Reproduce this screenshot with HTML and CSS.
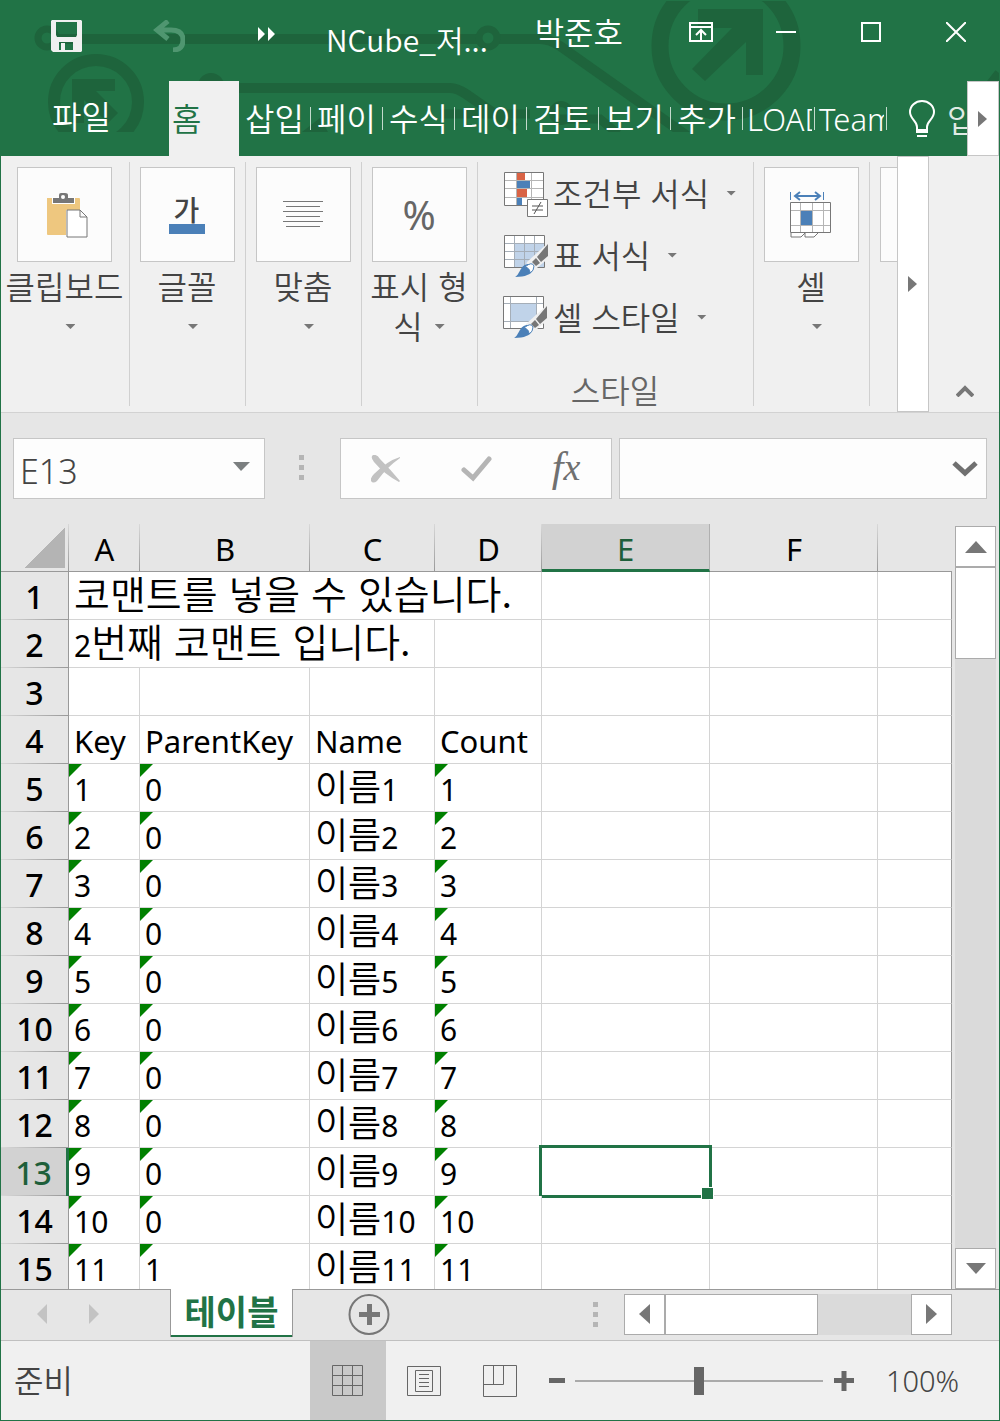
FILE: index.html
```html
<!DOCTYPE html>
<html lang="ko">
<head>
<meta charset="utf-8">
<meta name="viewport" content="width=device-width, initial-scale=1">
<title>NCube_저... - Excel</title>
<link rel="stylesheet" href="styles.css">
</head>
<body>
<div class="app">
  <header class="top">
    <svg class="circuit" width="998" height="131" viewBox="1 0 998 131" aria-hidden="true">
      <g fill="none" stroke="#1e643c">
        <circle cx="47" cy="37" r="9" stroke-width="7"/>
        <path d="M56 38H478M498 38H540Q550 38 560 45L690 137" stroke-width="10"/>
        <circle cx="488" cy="37" r="9" stroke-width="7"/>
        <circle cx="96" cy="101" r="42" stroke-width="12"/>
        <path d="M222 87H450Q457 87 466 93L515 127" stroke-width="10"/>
        <path d="M440 113H530" stroke-width="9"/>
        <circle cx="561" cy="112" r="9" stroke-width="6"/>
        <circle cx="726" cy="45" r="66" stroke-width="17"/>
        <path d="M560 118H600L618 133M985 90L999 72" stroke-width="9"/>
      </g>
      <g fill="#1e643c">
        <circle cx="211" cy="85" r="13"/>
        <path d="M72 78H115V90H96L118 112L108 122L84 99V122H72Z"/>
        <path d="M698 8H763V74H746V41L705 80L692 68L732 27H698Z"/>
        <path d="M302 131L320 117L328 131Z"/>
      </g>
    </svg>
    <div class="titlebar">
      <button class="quick" aria-label="저장">
        <svg width="32" height="32" viewBox="0 0 32 32"><path fill="#f0f0f0" fill-rule="evenodd" d="M1 0H30L31 1V31L30 32H2L0 30V1ZM5 2V15L6 17H25L26 15V2ZM8 22V30H10V23H14V30H22V22Z"/></svg>
      </button>
      <button class="quick" aria-label="실행 취소">
        <svg width="32" height="32" viewBox="0 0 32 32"><path fill="none" stroke="#4f9670" stroke-width="5" d="M15 1L4 10L15 19M4 10H18Q30 10 30 20T20 30"/></svg>
      </button>
      <button class="quick more" aria-label="더 보기">
        <svg width="18" height="14" viewBox="0 0 18 14"><path fill="#fff" d="M0 0L7 7L0 14ZM10 0L17 7L10 14Z"/></svg>
      </button>
      <h1 class="doc">NCube_저...</h1>
      <span class="user">박준호</span>
      <button class="win" aria-label="리본 표시 옵션">
        <svg width="24" height="20" viewBox="0 0 24 20" fill="none" stroke="#fff" stroke-width="2"><path d="M1 1H23V19H1ZM1 5H23M12 18V8M7 13L12 8L17 13"/></svg>
      </button>
      <button class="win" aria-label="최소화">
        <svg width="20" height="20" viewBox="0 0 20 20"><path d="M0 10H20" stroke="#fff" stroke-width="2"/></svg>
      </button>
      <button class="win" aria-label="최대화">
        <svg width="20" height="20" viewBox="0 0 20 20"><path d="M1 1H19V19H1Z" fill="none" stroke="#fff" stroke-width="2"/></svg>
      </button>
      <button class="win" aria-label="닫기">
        <svg width="20" height="20" viewBox="0 0 20 20"><path d="M0 0L20 20M20 0L0 20" stroke="#fff" stroke-width="2"/></svg>
      </button>
    </div>
    <nav class="tabs">
      <button class="file">파일</button>
      <button class="home">홈</button>
      <button class="tab">삽입</button>
      <button class="tab">페이</button>
      <button class="tab">수식</button>
      <button class="tab">데이</button>
      <button class="tab">검토</button>
      <button class="tab">보기</button>
      <button class="tab">추가</button>
      <button class="tab latin">LOAD</button>
      <button class="tab latin">Team</button>
      <button class="tell">
        <svg width="26" height="38" viewBox="0 0 26 38"><path d="M8 29V27C8 21 1 19 1 12A12 11 0 0 1 25 12C25 19 18 21 18 27V29" fill="none" stroke="#fff" stroke-width="2"/><path d="M7 29H19V33H7ZM8 35H18V37H8Z" fill="#fff"/></svg>
        <span>입</span>
      </button>
      <button class="tabscroll" aria-label="다음 탭">
        <svg width="10" height="16" viewBox="0 0 10 16"><path d="M0 0L9 8L0 16Z" fill="#777"/></svg>
      </button>
    </nav>
  </header>

  <section class="ribbon" aria-label="리본">
    <div class="group clip">
      <button class="big">
        <span class="tile"><svg width="46" height="46" viewBox="-4 0 46 46"><path d="M1 6H33Q34 6 34 7V18H20V43H2Q1 43 1 42Z" fill="#eec77f"/><path d="M6 5H29V12H6Z" fill="#fff"/><path d="M7 6H13V3Q13 1 15 1H19Q22 1 22 3V6H28V11H7Z" fill="#777"/><circle cx="17" cy="5" r="2" fill="#fff"/><path d="M21 18H34L41 25V45H21ZM34 18V25H41" fill="#fff" stroke="#777"/></svg></span>
        <span>클립보드<br>&nbsp;<i class="caret"></i></span>
      </button>
    </div>
    <div class="group">
      <button class="big">
        <span class="tile font"><b>가</b></span>
        <span>글꼴<br>&nbsp;<i class="caret"></i></span>
      </button>
    </div>
    <div class="group">
      <button class="big">
        <span class="tile"><svg width="40" height="27" viewBox="0 0 40 27"><path d="M0 .5H40M3 5.500H37M0 10.500H40M3 15.500H37M0 20.500H40M3 25.500H37" stroke="#777"/></svg></span>
        <span>맞춤<br>&nbsp;<i class="caret"></i></span>
      </button>
    </div>
    <div class="group">
      <button class="big">
        <span class="tile percent">%</span>
        <span>표시 형<br>식 <i class="caret"></i></span>
      </button>
    </div>
    <div class="group styles">
      <button class="line">
        <svg width="46" height="46" viewBox="0 0 46 46"><path d="M1 1H41V35H1Z" fill="#fff"/><path d="M1 9.500H41M1 17.500H41M1 26.500H41M13.500 1V35M28.500 1V35" stroke="#b5b5b5"/><path d="M14 2H22V9H14ZM14 18H24V26H14Z" fill="#d96345"/><path d="M14 10H27V17H14ZM14 27H19V34H14Z" fill="#4b80b8"/><path d="M1.500 1.500H40.500V34.500H1.500Z" fill="none" stroke="#777"/><path d="M24.500 28.500H44.500V45.500H24.500Z" fill="#fff" stroke="#777"/><path d="M29 35H40M29 39H40M31 43L38 31" stroke="#555" fill="none"/></svg>
        <span>조건부 서식</span><i class="caret"></i>
      </button>
      <button class="line">
        <svg width="46" height="46" viewBox="0 0 46 46"><path d="M1 2H42V34H1Z" fill="#fff"/><path d="M12 10H42V34H12Z" fill="#c0d3e9"/><path d="M1 10.500H42M1 18.500H42M1 26.500H42M11.500 2V34M21.500 2V34M31.500 2V34" stroke="#a5aeb8"/><path d="M1.500 2.500H41.500V34.500H1.500Z" fill="none" stroke="#777"/><path d="M46 9V25L29 39L22 36L24 29Z" fill="#f0f0f0"/><path d="M45 11V23L38 29L34 24ZM33 25L37 30L33 33L29 29Z" fill="#777"/><path d="M12 44C17 42 17 31 26 31C32 32 34 44 12 44Z" fill="#4b80b8"/><path d="M22 34Q29 28 31 33Q31 38 27 40Q27 35 22 34Z" fill="#fff" stroke="#4b80b8"/></svg>
        <span>표 서식</span><i class="caret"></i>
      </button>
      <button class="line">
        <svg width="46" height="46" viewBox="0 0 46 46"><path d="M0 1H41V34H0Z" fill="#fff"/><path d="M7 8H34V26H7Z" fill="#c0d3e9"/><path d="M0 8.500H41M0 26.500H41M7.500 1V34M33.500 1V34" stroke="#a5aeb8"/><path d="M.5 1.500H40.500V33.500H.5Z" fill="none" stroke="#777"/><path d="M45 9V25L28 39L21 36L23 29Z" fill="#f0f0f0"/><path d="M44 11V23L37 29L33 24ZM32 25L36 30L32 33L28 29Z" fill="#777"/><path d="M11 43C16 41 16 30 25 30C31 31 33 43 11 43Z" fill="#4b80b8"/><path d="M21 33Q28 27 30 32Q30 37 26 39Q26 34 21 33Z" fill="#fff" stroke="#4b80b8"/></svg>
        <span>셀 스타일</span><i class="caret"></i>
      </button>
      <p class="caption">스타일</p>
    </div>
    <div class="group">
      <button class="big">
        <span class="tile"><svg width="42" height="48" viewBox="0 0 42 48"><path d="M.5 1V9M33.500 1V9" stroke="#4b80b8"/><path d="M5 5H30M10 1L5 5L10 9M25 1L30 5L25 9" fill="none" stroke="#4b80b8" stroke-width="2"/><path d="M1 12H41V41H1Z" fill="#fff"/><path d="M1 19.500H41M1 34.500H41M10.500 12V41M22.500 12V41M33.500 12V41" stroke="#b5b5b5"/><path d="M11 20H22V34H11Z" fill="#4b80b8"/><path d="M.5 11.500H40.500V41.500H.5Z" fill="none" stroke="#777"/><path d="M1 42V46H11L15 42V46H24L28 42" fill="#fff" stroke="#777"/></svg></span>
        <span>셀<br>&nbsp;<i class="caret"></i></span>
      </button>
    </div>
    <div class="group cut"><span class="tile"></span></div>
    <button class="ribbonscroll" aria-label="리본 스크롤">
      <svg width="10" height="16" viewBox="0 0 10 16"><path d="M0 0L9 8L0 16Z" fill="#777"/></svg>
    </button>
    <button class="collapse" aria-label="리본 축소">
      <svg width="18" height="12" viewBox="0 0 18 12"><path d="M1 11L9 3L17 11" fill="none" stroke="#777" stroke-width="4"/></svg>
    </button>
  </section>

  <section class="formula">
    <div class="namebox">
      <input type="text" value="E13" aria-label="이름 상자">
      <svg width="17" height="9" viewBox="0 0 17 9"><path d="M0 0H17L8 9Z" fill="#7b7f80"/></svg>
    </div>
    <i class="dots"></i>
    <div class="fxbox">
      <button aria-label="취소"><svg width="30" height="28" viewBox="0 0 30 28"><path d="M2 0Q6 -1 9 4Q19 14 29 26L28 27Q13 19 3 7Q-1 2 2 0Z" fill="#c2c2c2"/><path d="M29 2L29 3Q16 12 6 26Q2 29 0 26Q-1 23 3 19Q16 6 29 2Z" fill="#c2c2c2"/></svg></button>
      <button aria-label="입력"><svg width="31" height="26" viewBox="0 0 31 26"><path d="M3 14L12 22L28 3" fill="none" stroke="#b5b5b5" stroke-width="5" stroke-linecap="round"/></svg></button>
      <button class="fx" aria-label="함수 삽입"><span>f</span>x</button>
    </div>
    <div class="fbar">
      <input type="text" aria-label="수식 입력줄">
      <svg width="26" height="17" viewBox="0 0 26 17"><path d="M2 3L13 13L24 3" fill="none" stroke="#707070" stroke-width="5"/></svg>
    </div>
  </section>

  <main class="work">
    <div class="sheet">
      <table>
        <colgroup><col class="w-row"><col class="w-a"><col class="w-b"><col class="w-c"><col class="w-d"><col class="w-e"><col class="w-e"><col></colgroup>
        <thead>
          <tr><th class="corner"></th><th>A</th><th>B</th><th>C</th><th>D</th><th class="on">E</th><th>F</th><th class="end"></th></tr>
        </thead>
        <tbody>
          <tr><th>1</th><td colspan="4"><span class="note">코맨트를 넣을 수 있습니다.</span></td><td></td><td></td><td></td></tr>
          <tr><th>2</th><td colspan="3">2<span class="note">번째 코맨트 입니다.</span></td><td></td><td></td><td></td><td></td></tr>
          <tr><th>3</th><td></td><td></td><td></td><td></td><td></td><td></td><td></td></tr>
          <tr class="names"><th>4</th><td>Key</td><td>ParentKey</td><td>Name</td><td>Count</td><td></td><td></td><td></td></tr>
          <tr><th>5</th><td class="flag">1</td><td class="flag">0</td><td><span class="ko">이름</span>1</td><td class="flag">1</td><td></td><td></td><td></td></tr>
          <tr><th>6</th><td class="flag">2</td><td class="flag">0</td><td><span class="ko">이름</span>2</td><td class="flag">2</td><td></td><td></td><td></td></tr>
          <tr><th>7</th><td class="flag">3</td><td class="flag">0</td><td><span class="ko">이름</span>3</td><td class="flag">3</td><td></td><td></td><td></td></tr>
          <tr><th>8</th><td class="flag">4</td><td class="flag">0</td><td><span class="ko">이름</span>4</td><td class="flag">4</td><td></td><td></td><td></td></tr>
          <tr><th>9</th><td class="flag">5</td><td class="flag">0</td><td><span class="ko">이름</span>5</td><td class="flag">5</td><td></td><td></td><td></td></tr>
          <tr><th>10</th><td class="flag">6</td><td class="flag">0</td><td><span class="ko">이름</span>6</td><td class="flag">6</td><td></td><td></td><td></td></tr>
          <tr><th>11</th><td class="flag">7</td><td class="flag">0</td><td><span class="ko">이름</span>7</td><td class="flag">7</td><td></td><td></td><td></td></tr>
          <tr><th>12</th><td class="flag">8</td><td class="flag">0</td><td><span class="ko">이름</span>8</td><td class="flag">8</td><td></td><td></td><td></td></tr>
          <tr><th class="on">13</th><td class="flag">9</td><td class="flag">0</td><td><span class="ko">이름</span>9</td><td class="flag">9</td><td class="active"></td><td></td><td></td></tr>
          <tr><th>14</th><td class="flag">10</td><td class="flag">0</td><td><span class="ko">이름</span>10</td><td class="flag">10</td><td></td><td></td><td></td></tr>
          <tr><th>15</th><td class="flag">11</td><td class="flag">1</td><td><span class="ko">이름</span>11</td><td class="flag">11</td><td></td><td></td><td></td></tr>
        </tbody>
      </table>
    </div>
    <div class="vscroll">
      <button aria-label="위로"><svg width="22" height="12" viewBox="0 0 22 12"><path d="M11 0L22 12H0Z" fill="#777"/></svg></button>
      <span class="thumb"></span>
      <button class="last" aria-label="아래로"><svg width="20" height="11" viewBox="0 0 20 11"><path d="M0 0H20L10 11Z" fill="#777"/></svg></button>
    </div>
  </main>

  <div class="sheetbar">
    <button class="step" aria-label="이전 시트"><svg width="10" height="20" viewBox="0 0 10 20"><path d="M10 0V20L0 10Z" fill="#c3c3c3"/></svg></button>
    <button class="step" aria-label="다음 시트"><svg width="10" height="20" viewBox="0 0 10 20"><path d="M0 0V20L10 10Z" fill="#c3c3c3"/></svg></button>
    <button class="sheettab">테이블</button>
    <button class="add" aria-label="새 시트"><svg width="42" height="42" viewBox="0 0 42 42"><circle cx="21" cy="21.500" r="19.500" fill="none" stroke="#777" stroke-width="2"/><path d="M11 21.500H32M21.500 11V32" stroke="#777" stroke-width="5"/></svg></button>
    <i class="dots"></i>
    <div class="hscroll">
      <button aria-label="왼쪽으로"><svg width="11" height="20" viewBox="0 0 11 20"><path d="M11 0V20L0 10Z" fill="#777"/></svg></button>
      <span class="thumb"></span>
      <button class="last" aria-label="오른쪽으로"><svg width="11" height="20" viewBox="0 0 11 20"><path d="M0 0V20L11 10Z" fill="#777"/></svg></button>
    </div>
  </div>

  <footer class="status">
    <span class="ready">준비</span>
    <button class="view on" aria-label="기본"><svg width="32" height="32" viewBox="0 0 32 32"><path d="M.5 .5H30.500V30.500H.5ZM10.500 0V31M20.500 0V31M0 10.500H31M0 20.500H31" fill="none" stroke="#666"/></svg></button>
    <button class="view" aria-label="페이지 레이아웃"><svg width="34" height="30" viewBox="0 0 34 30"><path d="M.5 .5H33.500V29.500H.5ZM8.500 4.500H25.500V25.500H8.500ZM12 8.500H22M12 12.500H22M12 16.500H22M12 20.500H22" fill="none" stroke="#666"/></svg></button>
    <button class="view" aria-label="페이지 나누기 미리 보기"><svg width="34" height="32" viewBox="0 0 34 32"><path d="M.5 .5H33.500V31.500H.5ZM.5 19.500H20.500V.5M10.500 .5V19.500" fill="none" stroke="#666"/></svg></button>
    <button class="zoom" aria-label="축소"><svg width="20" height="20" viewBox="0 0 20 20"><path d="M2 9.500H18" stroke="#666" stroke-width="5"/></svg></button>
    <input type="range" min="0" max="200" value="100" aria-label="확대/축소">
    <button class="zoom plus" aria-label="확대"><svg width="20" height="20" viewBox="0 0 20 20"><path d="M0 9.500H20M10 0V20" stroke="#666" stroke-width="5"/></svg></button>
    <button class="pct">100%</button>
  </footer>
</div>
</body>
</html>
```
FILE: styles.css
```css
* { box-sizing: border-box; }

body {
  margin: 0;
  font-family: "Noto Sans CJK KR", sans-serif;
  font-size: 32px;
  font-weight: 350;
  line-height: 40px;
  color: #444;
}

button, input {
  margin: 0;
  padding: 0;
  border: 0;
  background: none;
  font: inherit;
  color: inherit;
}

button {
  display: flex;
  align-items: center;
  justify-content: center;
  flex: none;
  white-space: nowrap;
}

svg { display: block; flex: none; }

.app {
  display: flex;
  flex-direction: column;
  height: 100vh;
  min-height: 800px;
  border: 1px solid #217346;
  background: #e6e6e6;
  overflow: hidden;
}

/* Title bar and tabs */
.top {
  position: relative;
  flex: none;
  background: #217346;
  color: #fff;
}

.circuit { position: absolute; left: 0; top: 0; }

.titlebar, .tabs { position: relative; display: flex; }

.titlebar { height: 80px; padding: 0 1px 10px 15px; align-items: center; }
.quick { width: 102px; height: 70px; }
.quick.more { width: 94px; padding-bottom: 4px; }
.doc {
  flex: 1;
  min-width: 0;
  margin: 0;
  padding: 6px 0 0 12px;
  font-size: 30px;
  font-weight: 350;
  white-space: nowrap;
}
.user { margin-right: 35px; padding-bottom: 10px; white-space: nowrap; }
.win { width: 85px; height: 70px; padding-bottom: 8px; }

.tabs { height: 75px; align-items: stretch; overflow: hidden; }
.file { width: 168px; padding: 0 7px 8px 0; }
.home { width: 70px; padding: 0 0 4px 3px; justify-content: flex-start; background: #f0f0f0; color: #217346; }
.tab {
  width: 72px;
  padding: 0 0 4px 6px;
  justify-content: flex-start;
  overflow: hidden;
  background: linear-gradient(#c3dacc, #c3dacc) right 26px / 1px 23px no-repeat;
}
.tab.latin {
  padding: 0 0 0 4px;
  border-right: 3px solid transparent;
  background-origin: border-box;
  font-family: "Noto Sans", sans-serif;
  font-size: 31px;
}
.tell { flex: 1; min-width: 0; gap: 12px; padding-left: 22px; justify-content: flex-start; overflow: hidden; color: #e0ebe4; }
.tell span { padding-bottom: 2px; }
.tabscroll { width: 32px; border: 1px solid #c6c6c6; background: #fff; }

/* Ribbon */
.ribbon {
  display: flex;
  flex: none;
  height: 257px;
  border-bottom: 1px solid #d2d2d2;
  background: #f0f0f0;
}
.group {
  flex: none;
  width: 116px;
  padding: 11px 2px 0 0;
  background: linear-gradient(#d0d0d0, #d0d0d0) right 6px / 1px 244px no-repeat;
}
.group.clip { width: 129px; }
.big { width: 100%; flex-direction: column; gap: 3px; }
.tile {
  display: flex;
  align-items: center;
  justify-content: center;
  flex: none;
  width: 95px;
  height: 95px;
  border: 1px solid #c6c6c6;
  background: #fcfcfc;
}
.tile.font { flex-direction: column; }
.font b { font-size: 28px; font-weight: 500; line-height: 26px; border-bottom: 10px solid #4b80b8; padding: 0 6px 2px 5px; }
.tile.percent { font-family: "Noto Sans", sans-serif; font-size: 40px; font-weight: 400; color: #666; }
.caret {
  display: inline-block;
  flex: none;
  width: 10px;
  height: 5px;
  vertical-align: 10px;
  background: #777;
  clip-path: polygon(0 0, 100% 0, 50% 100%);
}
.big .caret { margin-left: 3px; }
.styles { width: 276px; padding: 7px 0 0 25px; }
.line { height: 62px; gap: 4px; }
.line span { padding-bottom: 4px; }
.line .caret { margin: 0 0 2px 13px; }
.caption { margin: 0; padding: 18px 27px 0 0; text-align: center; line-height: 44px; color: #666; }
.cut { flex: 1 1 27px; min-width: 27px; width: auto; padding: 11px 0 0 10px; overflow: hidden; background: none; }
.cut .tile { width: 100%; border-right: 0; }
.ribbonscroll { width: 32px; border: 1px solid #c6c6c6; background: #fff; }
.collapse { width: 70px; align-items: flex-end; padding: 0 0 15px 2px; }

/* Formula bar */
.formula { display: flex; flex: none; height: 111px; padding: 25px 12px; align-items: flex-start; }
.namebox, .fxbox, .fbar {
  display: flex;
  align-items: center;
  height: 61px;
  border: 1px solid #c6c6c6;
  background: #fdfdfd;
}
.namebox { width: 252px; padding: 0 14px 0 6px; }
.namebox input {
  flex: 1;
  min-width: 0;
  height: 58px;
  padding-top: 4px;
  font-family: "Noto Sans", sans-serif;
  font-size: 34px;
}
.namebox svg { margin-bottom: 4px; }
.dots {
  flex: none;
  width: 5px;
  height: 25px;
  background: repeating-linear-gradient(#b5b5b5 0 5px, transparent 5px 10px);
}
.formula .dots { margin: 17px 36px 0 34px; }
.fxbox { width: 272px; margin-right: 7px; }
.fxbox button { width: 90px; height: 58px; }
.fxbox .fx { padding-bottom: 4px; font: italic 400 38px/40px "Liberation Serif", serif; color: #707070; }
.fx span { font-size: 42px; }
.fbar { flex: 1; min-width: 0; padding-right: 8px; }
.fbar input { flex: 1; min-width: 0; height: 58px; }

/* Grid */
.work { display: flex; flex: 1; min-height: 0; }
.sheet { flex: 1; min-width: 0; overflow: hidden; }
table {
  width: 100%;
  table-layout: fixed;
  border-collapse: separate;
  border-spacing: 0;
  font-family: "Noto Sans", "Noto Sans CJK KR", sans-serif;
  font-size: 30px;
  font-weight: 400;
  line-height: 40px;
  color: #000;
}
.w-row { width: 68px; }
.w-a { width: 71px; }
.w-b { width: 170px; }
.w-c { width: 125px; }
.w-d { width: 107px; }
.w-e { width: 168px; }

th, td { height: 48px; white-space: nowrap; }
th { padding: 3px 0 0; font-size: 31px; font-weight: 400; text-align: center; }
thead th {
  border-bottom: 1px solid #999;
  background: linear-gradient(#d8d8d8, #999) right / 1px 100% no-repeat;
}
thead .corner {
  background:
    linear-gradient(#d8d8d8, #999) right / 1px 100% no-repeat,
    linear-gradient(135deg, transparent 50%, #b4b4b4 50%) right 4px bottom 3px / 40px 40px no-repeat;
}
thead .end { background: none; }
thead .on { padding-top: 5px; border-bottom: 3px solid #217346; background: #d2d2d2; border-right: 1px solid #b0b0b0; color: #1e5f3a; }
tbody th {
  padding-top: 1px;
  border-right: 1px solid #999;
  background: linear-gradient(90deg, #d8d8d8, #999) bottom / 100% 1px no-repeat;
  font-size: 32px;
  font-weight: 500;
}
tbody .on { border-right: 3px solid #217346; background-color: #d2d2d2; color: #1e5f3a; }
td {
  padding: 5px 0 0 5px;
  border-right: 1px solid #d4d4d4;
  border-bottom: 1px solid #d4d4d4;
  background-color: #fff;
}
td:last-child { border-right-color: #999; }
.names td { padding-top: 3px; font-size: 31px; }
.flag, .active { position: relative; }
.flag::before {
  content: "";
  position: absolute;
  left: 0;
  top: 0;
  width: 13px;
  height: 13px;
  background: #008000;
  clip-path: polygon(0 0, 100% 0, 0 100%);
}
.note, .ko { font-family: "Noto Sans CJK KR", sans-serif; font-weight: 350; line-height: 0; }
.note { font-size: 39px; }
.ko { font-size: 36px; }
.active::before {
  content: "";
  position: absolute;
  inset: -3px;
  border: 3px solid #217346;
}
.active::after {
  content: "";
  position: absolute;
  right: -5px;
  bottom: -5px;
  width: 11px;
  height: 11px;
  border: 1px solid #fff;
  background: #217346;
}

/* Scroll bars */
.vscroll { display: flex; flex-direction: column; flex: none; width: 41px; margin: 2px 3px 0; background: #dadada; }
.vscroll button, .hscroll button { width: 41px; height: 41px; border: 1px solid #ababab; background: #fff; }
.thumb { border: 1px solid #ababab; background: #fff; }
.vscroll .thumb { height: 92px; }
.vscroll .last { margin-top: auto; }

/* Sheet tabs */
.sheetbar { display: flex; flex: none; height: 51px; border-top: 1px solid #999; align-items: center; padding: 0 47px 2px 0; }
.step { width: 52px; height: 48px; }
.step:first-child { margin-left: 15px; }
.sheettab {
  position: relative;
  align-self: flex-start;
  width: 123px;
  height: 48px;
  margin: -1px 0 0 50px;
  padding-bottom: 4px;
  border: solid #999;
  border-width: 0 1px;
  box-shadow: inset 0 -2px #217346;
  background: #fff;
  font-weight: 700;
  font-size: 34px;
  color: #217346;
}
.add { margin: 0 0 0 55px; }
.sheetbar .dots { margin: 0 26px 0 auto; }
.hscroll { display: flex; width: 328px; height: 41px; background: #dadada; }
.hscroll .thumb { width: 153px; }
.hscroll .last { margin-left: auto; }

/* Status bar */
.status { display: flex; flex: none; height: 80px; border-top: 1px solid #c0c0c0; align-items: center; background: #f0f0f0; }
.ready { flex: 1; padding: 0 0 4px 13px; white-space: nowrap; }
.view { width: 76px; height: 79px; }
.view.on { background: #c9c9c9; }
.zoom { width: 37px; height: 40px; }
.zoom.plus { width: 41px; }
.status input {
  -webkit-appearance: none;
  appearance: none;
  flex: none;
  width: 248px;
  height: 40px;
  background: linear-gradient(#aaa, #aaa) center / 100% 2px no-repeat;
}
.status input::-webkit-slider-thumb {
  -webkit-appearance: none;
  width: 10px;
  height: 28px;
  background: #666;
}
.pct { width: 135px; padding-right: 18px; font-family: "Noto Sans", sans-serif; font-size: 29px; }
```
